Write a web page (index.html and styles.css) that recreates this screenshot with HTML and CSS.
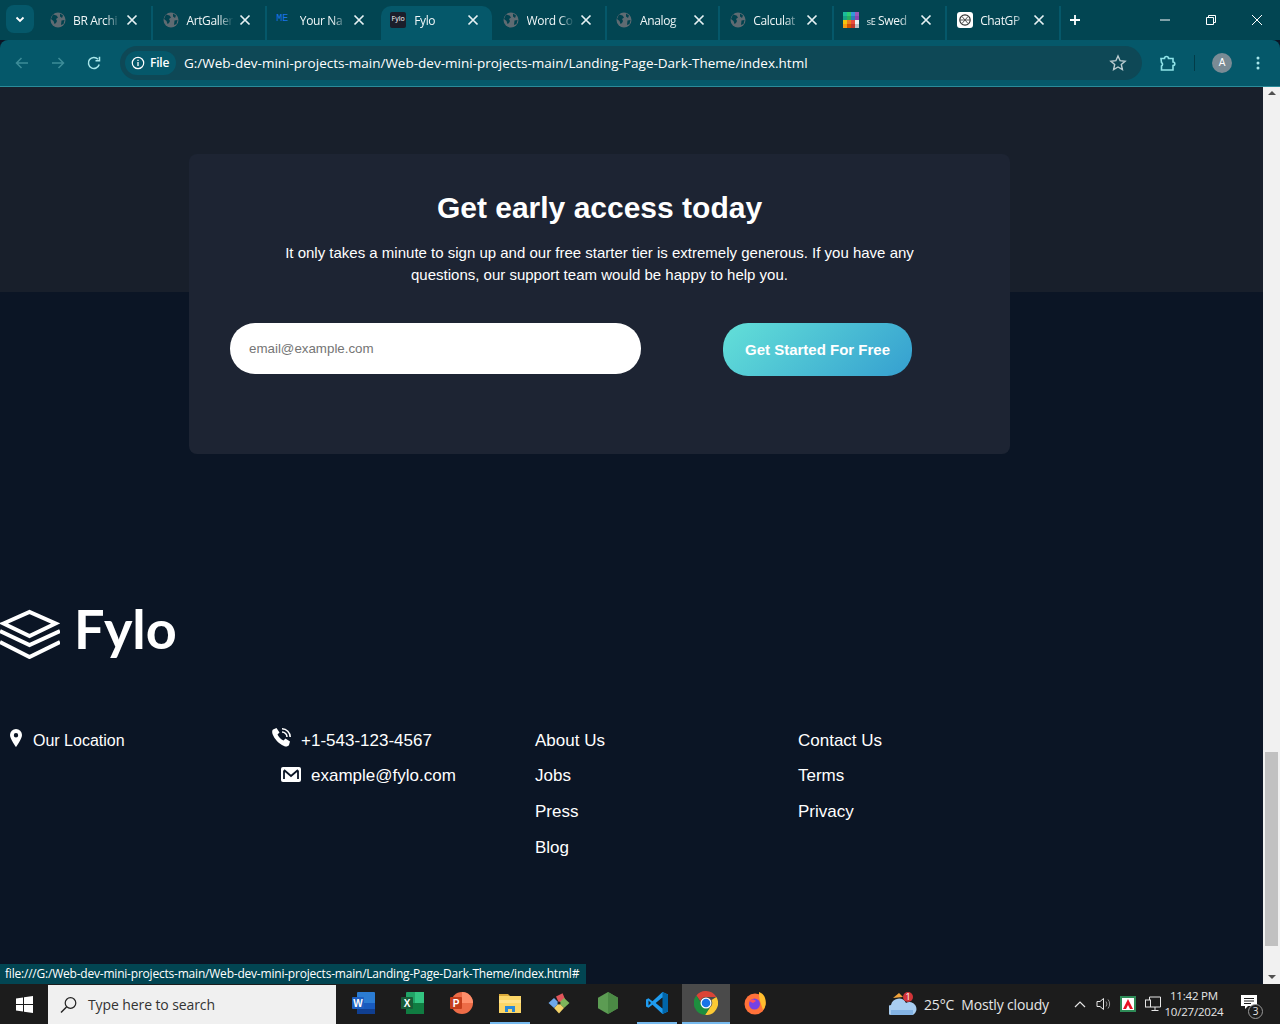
FILE: index.html
```html
<!DOCTYPE html>
<html>
<head>
    <title>Fylo</title>
    <link rel="stylesheet" href="styles.css">
</head>
<body>
    <svg class="defs" width="0" height="0">
        <symbol id="globe" viewBox="0 0 16 16">
            <circle cx="8" cy="8" r="7.5" fill="#5f6b72"/>
            <path d="M3 2.500l3.500 1 1.500 2-2 1.500 1 2-1 2-1.500 1-1-3-2.500-2zM10 1.500l3 2-1 2.500-2-1.500zM11.500 8.500l3-.5-1 4-2.500 1z" fill="#02424f"/>
        </symbol>
        <symbol id="close" viewBox="0 0 16 16">
            <path d="M3.500 3.500l9 9M12.500 3.500l-9 9" stroke="#e6f1f3" stroke-width="1.700" fill="none"/>
        </symbol>
    </svg>

    <!-- browser tabs -->
    <div class="tabstrip">
        <div class="tab-menu">
            <svg width="12" height="12" viewBox="0 0 12 12"><path d="M2.500 4.500L6 8l3.500-3.500" stroke="#fff" stroke-width="1.800" fill="none"/></svg>
        </div>
        <div class="tabs">
            <div class="tab">
                <svg class="favicon"><use href="#globe"/></svg>
                <span class="tab-title">BR Archi</span>
                <svg class="tab-close"><use href="#close"/></svg>
            </div>
            <div class="tab">
                <svg class="favicon"><use href="#globe"/></svg>
                <span class="tab-title">ArtGaller</span>
                <svg class="tab-close"><use href="#close"/></svg>
            </div>
            <div class="tab tab-noline">
                <span class="favicon favicon-me">ME</span>
                <span class="tab-title">Your Na</span>
                <svg class="tab-close"><use href="#close"/></svg>
            </div>
            <div class="tab tab-active">
                <span class="favicon favicon-fylo">Fylo</span>
                <span class="tab-title">Fylo</span>
                <svg class="tab-close"><use href="#close"/></svg>
            </div>
            <div class="tab">
                <svg class="favicon"><use href="#globe"/></svg>
                <span class="tab-title">Word Co</span>
                <svg class="tab-close"><use href="#close"/></svg>
            </div>
            <div class="tab">
                <svg class="favicon"><use href="#globe"/></svg>
                <span class="tab-title">Analog</span>
                <svg class="tab-close"><use href="#close"/></svg>
            </div>
            <div class="tab">
                <svg class="favicon"><use href="#globe"/></svg>
                <span class="tab-title">Calculat</span>
                <svg class="tab-close"><use href="#close"/></svg>
            </div>
            <div class="tab">
                <svg class="favicon" viewBox="0 0 16 16">
                    <rect width="4" height="4" x="0" y="0" fill="#1abc9c"/><rect width="4" height="4" x="4" y="0" fill="#2ecc71"/><rect width="4" height="4" x="8" y="0" fill="#3498db"/><rect width="4" height="4" x="12" y="0" fill="#9b59b6"/>
                    <rect width="4" height="4" x="0" y="4" fill="#16a085"/><rect width="4" height="4" x="4" y="4" fill="#27ae60"/><rect width="4" height="4" x="8" y="4" fill="#2980b9"/><rect width="4" height="4" x="12" y="4" fill="#8e44ad"/>
                    <rect width="4" height="4" x="0" y="8" fill="#f1c40f"/><rect width="4" height="4" x="4" y="8" fill="#e67e22"/><rect width="4" height="4" x="8" y="8" fill="#e74c3c"/><rect width="4" height="4" x="12" y="8" fill="#ecf0f1"/>
                    <rect width="4" height="4" x="0" y="12" fill="#f39c12"/><rect width="4" height="4" x="4" y="12" fill="#d35400"/><rect width="4" height="4" x="8" y="12" fill="#c0392b"/><rect width="4" height="4" x="12" y="12" fill="#bdc3c7"/>
                </svg>
                <span class="tab-title"><small>sE</small> Swed</span>
                <svg class="tab-close"><use href="#close"/></svg>
            </div>
            <div class="tab">
                <svg class="favicon" viewBox="0 0 16 16">
                    <rect width="16" height="16" rx="3" fill="#fff"/>
                    <circle cx="8" cy="8" r="5.200" fill="none" stroke="#333" stroke-width="1.200"/>
                    <path d="M5 4.500l6 7M11 4.500l-6 7M3 8h10" stroke="#555" stroke-width="1"/>
                </svg>
                <span class="tab-title">ChatGP</span>
                <svg class="tab-close"><use href="#close"/></svg>
            </div>
        </div>
        <svg class="new-tab" width="16" height="16" viewBox="0 0 16 16"><path d="M8 3v10M3 8h10" stroke="#fff" stroke-width="1.800"/></svg>
        <div class="win-controls">
            <svg width="46" height="16" viewBox="0 0 46 16"><path d="M18 8h10" stroke="#fff" stroke-width="1"/></svg>
            <svg width="46" height="16" viewBox="0 0 46 16"><path d="M18.500 5.500h7v7h-7zM20.500 5.500v-2h7v7h-2" stroke="#fff" stroke-width="1" fill="none"/></svg>
            <svg width="46" height="16" viewBox="0 0 46 16"><path d="M18 3l10 10M28 3L18 13" stroke="#fff" stroke-width="1"/></svg>
        </div>
    </div>

    <!-- address bar -->
    <div class="toolbar">
        <svg class="nav-btn" width="16" height="16" viewBox="0 0 16 16"><path d="M14 8H3M7.500 3L2.500 8l5 5" stroke="#3d8c98" stroke-width="1.500" fill="none"/></svg>
        <svg class="nav-btn" width="16" height="16" viewBox="0 0 16 16"><path d="M2 8h11M8.500 3l5 5-5 5" stroke="#3d8c98" stroke-width="1.500" fill="none"/></svg>
        <svg class="nav-btn" width="16" height="16" viewBox="0 0 16 16"><path d="M13.200 9.500A5.500 5.500 0 1 1 12 4.200M13.500 1.800v4h-4" stroke="#a8e6ea" stroke-width="1.500" fill="none"/></svg>
        <div class="omnibox">
            <div class="file-chip">
                <svg width="14" height="14" viewBox="0 0 14 14"><circle cx="7" cy="7" r="5.700" stroke="#fff" stroke-width="1.200" fill="none"/><path d="M7 6v4M7 3.800v1.200" stroke="#fff" stroke-width="1.300"/></svg>
                File
            </div>
            <span class="url">G:/Web-dev-mini-projects-main/Web-dev-mini-projects-main/Landing-Page-Dark-Theme/index.html</span>
            <svg class="star" width="18" height="18" viewBox="0 0 18 18"><path d="M9 2l2.100 4.700 5 .5-3.800 3.300 1.100 5L9 13l-4.400 2.500 1.100-5L1.900 7.200l5-.5z" stroke="#bccdd1" stroke-width="1.400" fill="none"/></svg>
        </div>
        <svg class="ext" width="18" height="18" viewBox="0 0 18 18"><path d="M2 4.500h3.500a2 2 0 0 1 4 0H14v3.500a1.800 1.800 0 0 1 0 3.600V16H2.500v-4a2 2 0 0 0 0-3.500z" stroke="#8fe3e8" stroke-width="1.600" fill="none"/></svg>
        <span class="toolbar-sep"></span>
        <span class="avatar">A</span>
        <svg class="dots" width="4" height="14" viewBox="0 0 4 14"><circle cx="2" cy="2" r="1.500" fill="#a8e6ea"/><circle cx="2" cy="7" r="1.500" fill="#a8e6ea"/><circle cx="2" cy="12" r="1.500" fill="#a8e6ea"/></svg>
    </div>

    <div class="viewport">
        <div class="page">
            <div class="band"></div>

            <section class="access-card">
                <h2>Get early access today</h2>
                <p>It only takes a minute to sign up and our free starter tier is extremely generous. If you have any questions, our support team would be happy to help you.</p>
                <form class="signup">
                    <input type="email" placeholder="email@example.com">
                    <button type="button">Get Started For Free</button>
                </form>
            </section>

            <footer>
                <div class="logo">
                    <svg width="60" height="50" viewBox="0 0 60 50">
                        <path d="M3.500 14.500L29.500 3l26 11.500-26 12.500z" stroke="#fff" stroke-width="4" fill="none"/>
                        <path d="M0 22l29.500 14L60 22M0 33l29.500 15L60 33" stroke="#fff" stroke-width="4" fill="none"/>
                    </svg>
                    <span>Fylo</span>
                </div>
                <div class="foot-cols">
                    <div class="foot-col">
                        <div class="foot-row foot-location">
                            <svg class="pin" width="12" height="18" viewBox="0 0 12 18"><path fill-rule="evenodd" d="M6 0a6 6 0 0 1 6 6c0 4-6 12-6 12S0 10 0 6a6 6 0 0 1 6-6zm0 4a2.200 2.200 0 1 0 0 4.400A2.200 2.200 0 0 0 6 4z" fill="#fff"/></svg>
                            Our Location
                        </div>
                    </div>
                    <div class="foot-col">
                        <div class="foot-row foot-phone">
                            <svg class="phone" width="19" height="19" viewBox="0 0 19 19"><path d="M1 1.500L4.500 0l3 4.500-2 2c1 2.500 3.500 5 6 6l2-2 4.500 3L17 17c-1 1.500-3 2-5 1C6.500 15.500 2.500 11 .5 6 0 4 0 2.500 1 1.500z" fill="#fff"/><path d="M10 4a5 5 0 0 1 5 5M10 .8A8.200 8.200 0 0 1 18.200 9" stroke="#fff" stroke-width="1.600" fill="none"/></svg>
                            +1-543-123-4567
                        </div>
                        <div class="foot-row foot-email">
                            <svg class="mail" width="20" height="15" viewBox="0 0 20 15"><rect width="20" height="15" rx="2" fill="#fff"/><path d="M3 3.500v8.500M17 3.500V12M3 3l7 6 7-6" stroke="#0a1525" stroke-width="1.800" fill="none"/></svg>
                            example@fylo.com
                        </div>
                    </div>
                    <div class="foot-col">
                        <a href="#">About Us</a>
                        <a href="#">Jobs</a>
                        <a href="#">Press</a>
                        <a href="#">Blog</a>
                    </div>
                    <div class="foot-col">
                        <a href="#">Contact Us</a>
                        <a href="#">Terms</a>
                        <a href="#">Privacy</a>
                    </div>
                </div>
            </footer>
        </div>

        <div class="scrollbar">
            <span class="arrow arrow-up"></span>
            <span class="thumb"></span>
            <span class="arrow arrow-down"></span>
        </div>

        <div class="status-bubble">file:///G:/Web-dev-mini-projects-main/Web-dev-mini-projects-main/Landing-Page-Dark-Theme/index.html#</div>
    </div>

    <!-- windows taskbar -->
    <div class="taskbar">
        <div class="start">
            <svg width="17" height="17" viewBox="0 0 17 17"><path d="M0 2.400l7-1v6.600H0zM8 1.300L17 0v8H8zM0 9h7v6.600l-7-1zM8 9h9v8l-9-1.300z" fill="#fff"/></svg>
        </div>
        <div class="search">
            <svg width="18" height="18" viewBox="0 0 18 18"><circle cx="10.500" cy="7" r="5.300" stroke="#222" stroke-width="1.200" fill="none"/><path d="M6.500 11L1 16.500" stroke="#222" stroke-width="1.400"/></svg>
            <span>Type here to search</span>
        </div>
        <div class="apps">
            <div class="app">
                <svg width="24" height="24" viewBox="0 0 24 24"><rect x="6" y="1" width="18" height="22" rx="1" fill="#2b7cd3"/><rect x="6" y="12" width="18" height="6" fill="#185abd"/><rect x="6" y="18" width="18" height="5" fill="#103f91"/><rect x="1" y="6" width="12" height="12" rx="1" fill="#1e5fc2"/><text x="7" y="15.500" class="app-letter">W</text></svg>
            </div>
            <div class="app">
                <svg width="24" height="24" viewBox="0 0 24 24"><rect x="6" y="1" width="18" height="22" rx="1" fill="#21a366"/><rect x="15" y="1" width="9" height="11" fill="#33c481"/><rect x="6" y="12" width="18" height="11" fill="#107c41"/><rect x="1" y="6" width="12" height="12" rx="1" fill="#185c37"/><text x="7" y="15.500" class="app-letter">X</text></svg>
            </div>
            <div class="app">
                <svg width="24" height="24" viewBox="0 0 24 24"><circle cx="13" cy="12" r="11" fill="#ed6c47"/><path d="M13 1a11 11 0 0 1 11 11H13z" fill="#ff8f6b"/><rect x="1" y="6" width="12" height="12" rx="1" fill="#c43e1c"/><text x="7" y="15.500" class="app-letter">P</text></svg>
            </div>
            <div class="app app-open">
                <svg width="24" height="24" viewBox="0 0 24 24"><path d="M1 3h9l2 2h11v5H1z" fill="#d9a93a"/><rect x="1" y="5" width="22" height="17" fill="#fcd667"/><rect x="1" y="9" width="22" height="3" fill="#ffe28a"/><path d="M7 21v-6h10v6h-3v-3h-4v3z" fill="#2b8ad8"/></svg>
            </div>
            <div class="app">
                <svg width="24" height="24" viewBox="0 0 24 24"><path d="M12 12L7 7l5-5.500L17 7z" fill="#e0555a" transform="rotate(20 12 12)"/><path d="M12 12l5-5 5.500 5-5.500 5z" fill="#7eb55a"/><path d="M12 12l5 5-5 5.500L7 17z" fill="#f2d269"/><path d="M12 12l-5 5-5.500-5L7 7z" fill="#6ea8ea"/><circle cx="12" cy="12" r="1.600" fill="#222"/></svg>
            </div>
            <div class="app">
                <svg width="24" height="24" viewBox="0 0 24 24"><path d="M12 1l10 5.800v10.400L12 23 2 17.200V6.800z" fill="#5c9c53"/><path d="M12 1l10 5.800v10.400L12 23z" fill="#4b8a45"/></svg>
            </div>
            <div class="app app-open">
                <svg width="24" height="24" viewBox="0 0 24 24"><path d="M17.500 1L23 3.500v17L17.500 23 7.500 13.800l-4 3L1 15.500V8.500l2.500-1.300 4 3z" fill="#1f9cf0"/><path d="M17.500 6.500L10.800 12l6.700 5.500zM17.500 1v22L23 20.500v-17z" fill="#0065a9"/><path d="M17.500 6.500V17.500L10.800 12z" fill="#1c1c1c"/><path d="M3.500 9.500L6 12l-2.500 2.500z" fill="#1c1c1c"/></svg>
            </div>
            <div class="app app-open app-active">
                <svg width="24" height="24" viewBox="0 0 24 24"><path d="M12 0a12 12 0 0 1 10.400 6H12a6 6 0 0 0-5.700 4L2.400 4.500A12 12 0 0 1 12 0z" fill="#db4437"/><path d="M22.400 6A12 12 0 0 1 11 24l4.700-7.200A6 6 0 0 0 17.500 9z" fill="#fcc934"/><path d="M2.400 4.500L7 12a6 6 0 0 0 8.700 4.800L11 24A12 12 0 0 1 2.400 4.500z" fill="#1e8e3e"/><circle cx="12" cy="12" r="5.500" fill="#fff"/><circle cx="12" cy="12" r="4.300" fill="#1a73e8"/></svg>
            </div>
            <div class="app">
                <svg width="24" height="24" viewBox="0 0 24 24"><circle cx="12" cy="13" r="10.500" fill="#ff7139"/><path d="M22 7c1.500 4 1 9-2 12l-3-9c-1-3-1-6-1-9 3 1 5 3 6 6z" fill="#ffbd2e"/><circle cx="11.500" cy="13" r="5.500" fill="#7542e5"/><path d="M6 10c2-2 5-2 7 0l-3 2z" fill="#ff4f5e"/></svg>
            </div>
        </div>
        <div class="tray">
            <div class="weather">
                <svg width="28" height="26" viewBox="0 0 28 26"><path d="M4 7l6-5 4 4z" fill="#f2a33a"/><path d="M2 24a5 5 0 0 1 0-10 8 8 0 0 1 15-2 6 6 0 0 1 7 12z" fill="#a8cdf0"/><path d="M2 19h22v5H2z" fill="#84b4e4"/><circle cx="19" cy="6" r="5" fill="#d13438"/><text x="19" y="9" class="badge-num">1</text></svg>
                <span class="temp">25°C</span>
                <span>Mostly cloudy</span>
            </div>
            <svg class="tray-caret" width="12" height="12" viewBox="0 0 12 12"><path d="M1 9l5-5 5 5" stroke="#e6e6e6" stroke-width="1.200" fill="none"/></svg>
            <svg class="tray-sound" width="16" height="16" viewBox="0 0 16 16"><path d="M1 5.500h3L7.500 2.500v11L4 10.500H1z" stroke="#e6e6e6" stroke-width="1" fill="none"/><path d="M10 5.500a4 4 0 0 1 0 5M12 3.500a7 7 0 0 1 0 9" stroke="#999" stroke-width="1" fill="none"/></svg>
            <svg class="tray-app" width="16" height="16" viewBox="0 0 16 16"><rect width="16" height="16" fill="#2e8b57"/><rect x="2" y="2" width="12" height="12" fill="#fff"/><path d="M8 3l5 10H10L8 9l-2 4H3z" fill="#e81123"/></svg>
            <svg class="tray-net" width="16" height="16" viewBox="0 0 16 16"><path d="M4.500 4V1h11v10H6M10 11v3M6.500 14.500h7" stroke="#e6e6e6" stroke-width="1" fill="none"/><rect x=".5" y="4" width="5" height="7" stroke="#e6e6e6" fill="#1c1c1c"/></svg>
            <div class="clock">
                <span>11:42 PM</span>
                <span>10/27/2024</span>
            </div>
            <div class="notif">
                <svg width="16" height="15" viewBox="0 0 16 15"><path d="M0 0h16v11H7l-3 3v-3H0z" fill="#fff"/><path d="M3 3.500h10M3 6h10M3 8.500h7" stroke="#1c1c1c"/></svg>
                <span class="notif-count">3</span>
            </div>
        </div>
    </div>
</body>
</html>
```

FILE: styles.css
```css
* {
    box-sizing: border-box;
}

body {
    margin: 0;
    height: 1024px;
    overflow: hidden;
    display: flex;
    flex-direction: column;
    font-family: "Liberation Sans", Arial, sans-serif;
    background-color: #0b1525;
}

.defs {
    position: absolute;
}

/* tabs */
.tabstrip {
    height: 40px;
    flex: none;
    display: flex;
    align-items: center;
    padding-left: 6px;
    background-color: #024552;
    font-family: "Open Sans", sans-serif;
}

.tab-menu {
    width: 28px;
    height: 28px;
    margin-top: -2px;
    border-radius: 8px;
    background-color: #05586a;
    display: flex;
    align-items: center;
    justify-content: center;
}

.tabs {
    display: flex;
    margin-left: 6px;
    height: 40px;
    padding-top: 6px;
}

.tab {
    width: 113.4px;
    height: 34px;
    padding-left: 9.5px;
    padding-bottom: 6px;
    display: flex;
    align-items: center;
    position: relative;
    color: #f0f6f7;
    font-size: 12px;
    letter-spacing: -0.35px;
    border-right: 2px solid #05586a;
    background-clip: padding-box;
}

.tab:nth-child(3),
.tab:nth-child(4) {
    border-right-color: transparent;
}

.tab-active {
    background-color: #05586a;
    border-radius: 10px 10px 0 0;
    width: 111px;
    margin-left: 1px;
    margin-right: 1.400px;
    border-right: none;
    padding-left: 9px;
}

.favicon {
    width: 16px;
    height: 16px;
    flex: none;
}

.favicon-me {
    color: #1a73e8;
    font-family: "Liberation Mono", monospace;
    font-size: 10px;
    letter-spacing: 0;
    line-height: 14px;
}

.favicon-fylo {
    background-color: #1b1e2b;
    color: #fff;
    border-radius: 2px;
    font-size: 7px;
    letter-spacing: 0;
    line-height: 13px;
    text-align: center;
}

.tab-title {
    width: 50px;
    margin-left: 7.5px;
    white-space: nowrap;
    overflow: hidden;
    -webkit-mask-image: linear-gradient(to right, #000 65%, transparent 95%);
    mask-image: linear-gradient(to right, #000 65%, transparent 95%);
}

.tab-active .tab-title {
    margin-left: 8px;
}

.tab-title small {
    font-size: 9px;
}

.tab-close {
    width: 16px;
    height: 16px;
    flex: none;
    margin-left: 1px;
}

.new-tab {
    margin-left: 6px;
}

.win-controls {
    margin-left: auto;
    display: flex;
}

/* address bar */
.toolbar {
    height: 47px;
    flex: none;
    display: flex;
    align-items: center;
    padding: 0 0 1px 14px;
    background-color: #05586a;
    border-bottom: 1px solid #2a8b99;
    border-radius: 8px 8px 0 0;
}

.nav-btn {
    margin-right: 20px;
}

.omnibox {
    width: 1022px;
    height: 34px;
    margin-left: -2px;
    display: flex;
    align-items: center;
    padding: 0 15px 0 5px;
    border-radius: 17px;
    background-color: #0e4856;
}

.file-chip {
    width: 51px;
    height: 24px;
    display: flex;
    align-items: center;
    gap: 5px;
    padding-left: 6px;
    border-radius: 12px;
    background-color: #05586a;
    color: #fff;
    font-family: "Open Sans", sans-serif;
    font-size: 12px;
    font-weight: 600;
    letter-spacing: -0.2px;
}

.url {
    margin-left: 8px;
    color: #fff;
    font-family: "Open Sans", sans-serif;
    font-size: 13.5px;
}

.star {
    margin-left: auto;
}

.ext {
    margin-left: 17px;
}

.toolbar-sep {
    width: 1px;
    height: 16px;
    margin-left: 17px;
    background-color: #023c48;
}

.avatar {
    width: 20px;
    height: 20px;
    margin-left: 17px;
    border-radius: 50%;
    background-color: #7a8b95;
    color: #fff;
    font-size: 10px;
    line-height: 20px;
    text-align: center;
}

.dots {
    margin-left: 24px;
}

/* page */
.viewport {
    flex: 1;
    display: flex;
    position: relative;
    overflow: hidden;
}

.page {
    flex: 1;
    color: #fff;
    background-color: #0b1525;
}

.band {
    height: 205px;
    background-color: #181f2b;
}

.access-card {
    width: 821px;
    height: 300px;
    margin: -138px 0 0 189px;
    padding: 34px 98px 0 41px;
    border-radius: 8px;
    background-color: #1d2433;
    position: relative;
}

.access-card h2 {
    margin: 0 -24px 0 0;
    padding-left: 33px;
    font-size: 30px;
    line-height: 40px;
    text-align: center;
}

.access-card p {
    margin: 14px -24px 0 0;
    padding-left: 33px;
    font-size: 15px;
    line-height: 22px;
    text-align: center;
}

.signup {
    margin-top: 37px;
    display: flex;
    justify-content: space-between;
    align-items: flex-start;
}

.signup input {
    width: 411px;
    height: 51px;
    padding: 0 19px;
    border: none;
    border-radius: 25px;
    font-family: "Liberation Sans", Arial, sans-serif;
    font-size: 13.33px;
}

.signup input::placeholder {
    color: #757575;
}

.signup button {
    width: 189px;
    height: 53px;
    border: none;
    border-radius: 25px;
    background-image: linear-gradient(135deg, #63e0d8, #359fd0);
    color: #fff;
    font-family: "Liberation Sans", Arial, sans-serif;
    font-size: 15px;
    font-weight: bold;
    cursor: pointer;
}

.logo {
    margin-top: 155px;
    height: 50px;
    display: flex;
    align-items: center;
    gap: 14px;
}

.logo span {
    margin-top: -10px;
    font-family: Lato, sans-serif;
    font-size: 54px;
    font-weight: 700;
    line-height: 50px;
}

.foot-cols {
    margin-top: 64px;
    padding-left: 9px;
    display: grid;
    grid-template-columns: repeat(4, 263px);
    font-size: 17px;
}

.foot-col a,
.foot-row {
    display: flex;
    align-items: center;
    height: 35.6px;
    color: #fff;
    text-decoration: none;
}

.foot-location {
    font-size: 16px;
}

.pin {
    margin: -6px 11px 0 1px;
}

.phone {
    margin: -6px 10px 0 0;
}

.foot-email {
    padding-left: 9px;
}

.mail {
    margin: -4px 10px 0 0;
}

/* scrollbar */
.scrollbar {
    width: 17px;
    flex: none;
    display: flex;
    flex-direction: column;
    align-items: center;
    background-color: #f1f1f1;
}

.arrow {
    width: 0;
    height: 0;
    flex: none;
    border-left: 4px solid transparent;
    border-right: 4px solid transparent;
}

.arrow-up {
    margin-top: 4px;
    border-bottom: 4px solid #505050;
}

.arrow-down {
    margin-top: auto;
    margin-bottom: 5px;
    border-top: 4px solid #505050;
}

.thumb {
    width: 13px;
    height: 194px;
    margin-top: 657px;
    background-color: #c1c1c1;
}

.status-bubble {
    position: absolute;
    left: 0;
    bottom: 0;
    width: 586px;
    height: 20px;
    padding: 0 5px;
    background-color: #024552;
    color: #fff;
    font-family: "Open Sans", sans-serif;
    font-size: 12px;
    letter-spacing: -0.21px;
    line-height: 20px;
    white-space: nowrap;
}

/* taskbar */
.taskbar {
    height: 40px;
    flex: none;
    display: flex;
    background-color: #1c1c1c;
    color: #e6e6e6;
    font-family: "Open Sans", sans-serif;
    font-size: 13px;
}

.start {
    width: 48px;
    display: flex;
    align-items: center;
    justify-content: center;
}

.search {
    width: 288px;
    margin-top: 1px;
    padding-left: 12px;
    display: flex;
    align-items: center;
    gap: 10px;
    background-color: #f0f0f0;
    color: #333;
    font-size: 14px;
    letter-spacing: -0.1px;
}

.apps {
    display: flex;
    margin-left: 2px;
}

.app {
    width: 49px;
    display: flex;
    align-items: center;
    justify-content: center;
    border-bottom: 2px solid transparent;
}

.app-open {
    border-bottom-color: #76b9ed;
    margin: 0 4.5px;
    width: 40px;
}

.app-active {
    background-color: #4a4a4a;
    margin: 0 0.5px;
    width: 48px;
}

.app-letter {
    fill: #fff;
    font-family: "Liberation Sans", sans-serif;
    font-size: 10px;
    font-weight: bold;
    text-anchor: middle;
}

.badge-num {
    fill: #fff;
    font-size: 9px;
    text-anchor: middle;
}

.tray {
    flex: 1;
    display: flex;
    align-items: center;
    padding-left: 110px;
}

.weather {
    display: flex;
    align-items: center;
    gap: 6px;
    font-size: 14px;
    letter-spacing: -0.15px;
}

.temp {
    margin-left: 1px;
    margin-right: 1px;
}

.tray-caret {
    margin-left: 25px;
}

.tray-sound {
    margin-left: 10px;
}

.tray-app {
    margin-left: 8px;
}

.tray-net {
    margin-left: 9px;
}

.clock {
    margin-left: -3px;
    width: 72px;
    display: flex;
    flex-direction: column;
    align-items: center;
    font-size: 11.5px;
    letter-spacing: -0.2px;
    line-height: 16px;
}

.notif {
    margin-left: 11px;
    position: relative;
}

.notif-count {
    position: absolute;
    left: 7px;
    top: 9px;
    width: 15px;
    height: 15px;
    border-radius: 50%;
    border: 1px solid #999;
    background-color: #1c1c1c;
    font-size: 10px;
    line-height: 13px;
    text-align: center;
}
```
